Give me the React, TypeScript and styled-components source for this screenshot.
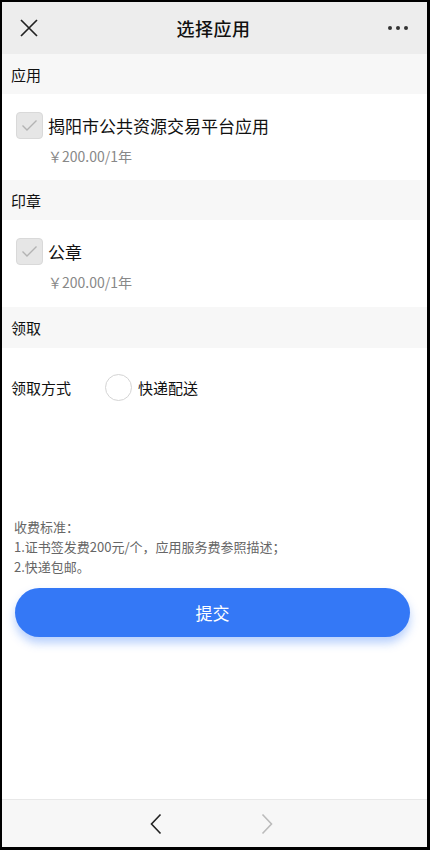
import React from "react"
import styled, { createGlobalStyle } from "styled-components"

const GlobalStyle = createGlobalStyle`
  html, body {
    margin: 0;
    padding: 0;
    background: #000;
  }
  body {
    font-family: "Noto Sans CJK SC", "Noto Sans", sans-serif;
    color: #111;
  }
  * {
    box-sizing: border-box;
  }
`

const Frame = styled.div`
  width: 430px;
  height: 850px;
  border-style: solid;
  border-color: #000;
  border-width: 2px 3px 3px 2px;
  background: #fff;
  display: flex;
  flex-direction: column;
  overflow: hidden;
`

const NavBar = styled.div`
  height: 52px;
  flex-shrink: 0;
  background: #ededed;
  display: flex;
  align-items: center;
  justify-content: space-between;
  padding: 0 18px 0 16px;
`

const NavTitle = styled.div`
  font-size: 18px;
  font-weight: 500;
  color: #111;
  letter-spacing: 0.5px;
`

const IconButton = styled.div`
  width: 22px;
  height: 22px;
  display: flex;
  align-items: center;
  justify-content: center;
`

const SectionHeader = styled.div<{ $h: number }>`
  height: ${p => p.$h}px;
  flex-shrink: 0;
  background: #f7f7f7;
  display: flex;
  align-items: center;
  padding-left: 9px;
  font-size: 15px;
  line-height: 1;
  color: #111;
`

const Item = styled.div<{ $h: number }>`
  padding: 18px 0 0 14px;
  height: ${p => p.$h}px;
  flex-shrink: 0;
`

const ItemTop = styled.div`
  display: flex;
  align-items: center;
  gap: 5px;
`

const CheckBox = styled.div`
  width: 27px;
  height: 27px;
  border-radius: 4px;
  border: 1px solid #d9d9d9;
  background: #e6e6e6;
  display: flex;
  align-items: center;
  justify-content: center;
`

const ItemName = styled.div`
  font-size: 17px;
  line-height: 1;
  color: #111;
`

const Price = styled.div`
  margin: 9px 0 0 32px;
  font-size: 14px;
  line-height: 1.2;
  color: #888;
`

const FieldRow = styled.div`
  display: flex;
  align-items: center;
  padding: 26px 0 0 9px;
  flex-shrink: 0;
`

const FieldLabel = styled.div`
  width: 94px;
  font-size: 15px;
  color: #111;
`

const Radio = styled.div`
  width: 27px;
  height: 27px;
  border-radius: 50%;
  border: 1px solid #d4d4d4;
  background: #fff;
  margin-right: 6px;
`

const RadioText = styled.div`
  font-size: 15px;
  color: #111;
`

const Spacer = styled.div`
  flex: 1;
`

const Notes = styled.div`
  padding: 0 0 0 12px;
  margin-top: 116px;
  font-size: 13px;
  line-height: 20px;
  color: #666;
`

const SubmitButton = styled.button`
  margin: 11px 17px 0 13px;
  height: 49px;
  flex-shrink: 0;
  border: none;
  border-radius: 25px;
  background: #3478f6;
  color: #fff;
  font-size: 17px;
  font-family: "Noto Sans CJK SC", "Noto Sans", sans-serif;
  box-shadow: 0 6px 10px rgba(52, 120, 246, 0.35);
`

const BottomBar = styled.div`
  height: 48px;
  flex-shrink: 0;
  background: #f7f7f7;
  border-top: 1px solid #e8e8e8;
  display: flex;
  align-items: center;
  justify-content: center;
  gap: 99px;
  padding-right: 6px;
`

const CloseIcon = () => (
  <svg width="20" height="20" viewBox="0 0 20 20">
    <path d="M2 2 L18 18 M18 2 L2 18" stroke="#222" strokeWidth="1.7" fill="none" />
  </svg>
)

const MoreIcon = () => (
  <svg width="22" height="6" viewBox="0 0 22 6">
    <circle cx="3" cy="3" r="2" fill="#333" />
    <circle cx="11" cy="3" r="2" fill="#333" />
    <circle cx="19" cy="3" r="2" fill="#333" />
  </svg>
)

const CheckMark = () => (
  <svg width="17" height="13" viewBox="0 0 17 13">
    <path d="M1.5 6.5 L6 11 L15.5 1.5" stroke="#b3b3b3" strokeWidth="1.4" fill="none" />
  </svg>
)

const Chevron = ({ dir, color }: { dir: "left" | "right"; color: string }) => (
  <svg width="12" height="22" viewBox="0 0 12 22">
    <path
      d={dir === "left" ? "M10.5 1.5 L1.5 11 L10.5 20.5" : "M1.5 1.5 L10.5 11 L1.5 20.5"}
      stroke={color}
      strokeWidth="1.6"
      fill="none"
    />
  </svg>
)

const products = [
  { section: "应用", name: "揭阳市公共资源交易平台应用", price: "￥200.00/1年", h: 86 },
  { section: "印章", name: "公章", price: "￥200.00/1年", h: 87 },
]

export default function App() {
  return (
    <>
      <GlobalStyle />
      <Frame>
        <NavBar>
          <IconButton>
            <CloseIcon />
          </IconButton>
          <NavTitle>选择应用</NavTitle>
          <IconButton>
            <MoreIcon />
          </IconButton>
        </NavBar>
        {products.map(p => (
          <React.Fragment key={p.section}>
            <SectionHeader $h={40}>{p.section}</SectionHeader>
            <Item $h={p.h}>
              <ItemTop>
                <CheckBox>
                  <CheckMark />
                </CheckBox>
                <ItemName>{p.name}</ItemName>
              </ItemTop>
              <Price>{p.price}</Price>
            </Item>
          </React.Fragment>
        ))}
        <SectionHeader $h={41}>领取</SectionHeader>
        <FieldRow>
          <FieldLabel>领取方式</FieldLabel>
          <Radio />
          <RadioText>快递配送</RadioText>
        </FieldRow>
        <Notes>
          收费标准：
          <br />
          1.证书签发费200元/个，应用服务费参照描述；
          <br />
          2.快递包邮。
        </Notes>
        <SubmitButton>提交</SubmitButton>
        <Spacer />
        <BottomBar>
          <Chevron dir="left" color="#222" />
          <Chevron dir="right" color="#bbb" />
        </BottomBar>
      </Frame>
    </>
  )
}
